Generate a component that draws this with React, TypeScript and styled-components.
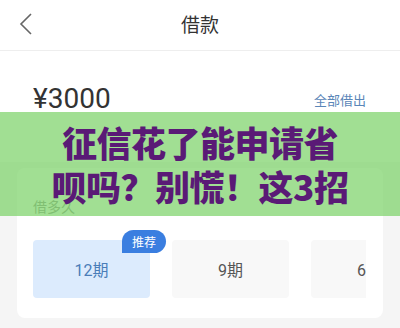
import React from "react";
import styled, { createGlobalStyle } from "styled-components";

const Global = createGlobalStyle`
  html, body { margin: 0; padding: 0; }
  body {
    width: 400px; height: 328px; overflow: hidden;
    background: #f5f5f5;
    font-family: Roboto, "Noto Sans CJK SC", sans-serif;
  }
`;

const Page = styled.div`
  position: relative;
  width: 400px;
  height: 328px;
  overflow: hidden;
  background: #f5f5f5;
`;

const Header = styled.div`
  height: 50px;
  background: #fff;
  border-bottom: 1px solid #eeeeee;
  display: flex;
  align-items: center;
  justify-content: center;
  position: relative;
`;

const Back = styled.div`
  position: absolute;
  left: 18px;
  top: 12px;
  width: 18px;
  height: 24px;
  display: flex;
`;

const Title = styled.div`
  font-family: "Noto Sans CJK SC", sans-serif;
  font-size: 19px;
  color: #333;
  margin-top: -4px;
`;

const AmountSection = styled.div`
  background: #fff;
  height: 111px;
  display: flex;
  align-items: flex-start;
  justify-content: space-between;
  padding: 31px 34px 0 33px;
  box-sizing: border-box;
`;

const Amount = styled.div`
  font-family: Roboto, sans-serif;
  font-size: 28px;
  color: #333;
  line-height: 34px;
`;

const AllOut = styled.div`
  font-family: "Noto Sans CJK SC", sans-serif;
  font-size: 13px;
  color: #5a86b8;
  margin-top: 8px;
`;

const Card = styled.div`
  margin: 6px 17px 0;
  background: #fff;
  border-radius: 8px;
  height: 150px;
  padding: 28px 17px 0 16px;
  box-sizing: border-box;
`;

const Label = styled.div`
  font-family: "Noto Sans CJK SC", sans-serif;
  font-size: 14px;
  color: #8a8a8a;
  line-height: 20px;
`;

const Options = styled.div`
  display: flex;
  gap: 22px;
  overflow: hidden;
  padding-top: 10px;
  margin-top: 14px;
`;

const Option = styled.div<{ $active?: boolean }>`
  position: relative;
  flex: 0 0 117px;
  height: 58px;
  border-radius: 4px;
  background: ${(p) => (p.$active ? "#dcebfd" : "#f8f8f8")};
  color: ${(p) => (p.$active ? "#4a7db8" : "#555")};
  font-family: Roboto, "Noto Sans CJK SC", sans-serif;
  font-size: 16px;
  display: flex;
  align-items: center;
  justify-content: center;
`;

const Badge = styled.div`
  position: absolute;
  right: -16px;
  top: -10px;
  width: 44px;
  height: 23px;
  background: #3a7ee0;
  color: #fff;
  font-family: "Noto Sans CJK SC", sans-serif;
  font-size: 12px;
  border-radius: 12px 12px 12px 0;
  display: flex;
  align-items: center;
  justify-content: center;
`;

const Overlay = styled.div`
  position: absolute;
  left: 0;
  top: 112px;
  width: 400px;
  height: 104px;
  background: rgba(125, 210, 105, 0.72);
  display: flex;
  flex-direction: column;
  align-items: center;
  justify-content: center;
`;

const Headline = styled.div`
  font-family: "Noto Sans CJK SC", sans-serif;
  font-weight: 900;
  font-size: 35px;
  line-height: 44px;
  color: #5a1a76;
  text-align: center;
  letter-spacing: -0.5px;
`;

export default function App() {
  return (
    <Page>
      <Global />
      <Header>
        <Back>
          <svg width="18" height="24" viewBox="0 0 18 24">
            <path d="M13 2 L3 12 L13 22" fill="none" stroke="#666" strokeWidth="1.6" />
          </svg>
        </Back>
        <Title>借款</Title>
      </Header>
      <AmountSection>
        <Amount>¥3000</Amount>
        <AllOut>全部借出</AllOut>
      </AmountSection>
      <Card>
        <Label>借多久</Label>
        <Options>
          <Option $active>
            12期
            <Badge>推荐</Badge>
          </Option>
          <Option>9期</Option>
          <Option>6期</Option>
        </Options>
      </Card>
      <Overlay>
        <Headline>征信花了能申请省</Headline>
        <Headline>呗吗？别慌！这3招</Headline>
      </Overlay>
    </Page>
  );
}
